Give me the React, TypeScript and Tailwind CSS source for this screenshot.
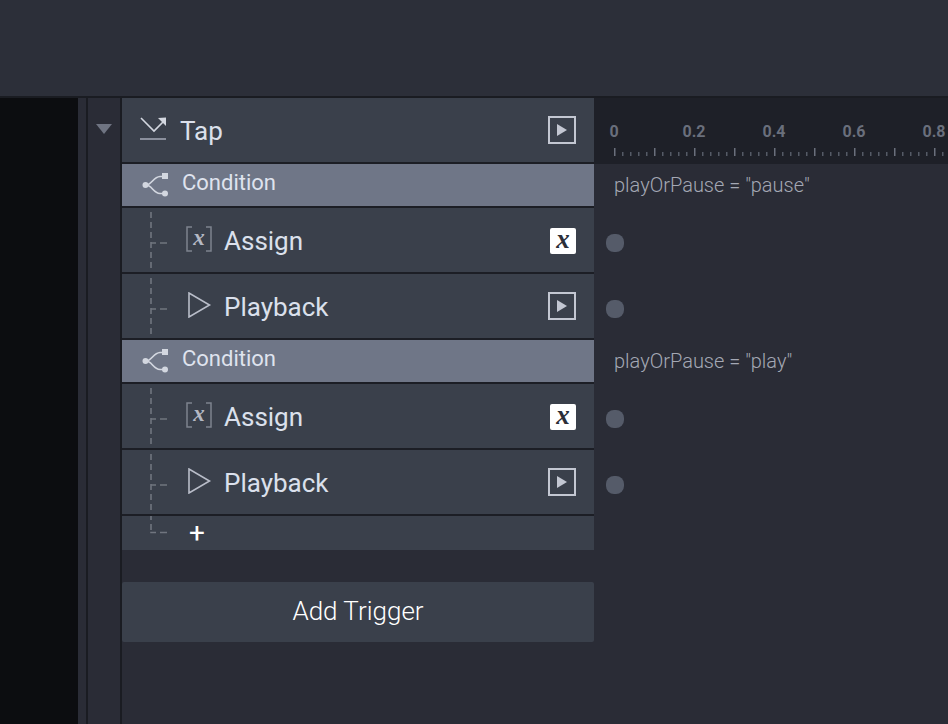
const ticks = Array.from({ length: 42 }, (_, i) => i);

function TapIcon() {
  return (
    <svg width="28" height="26" viewBox="0 0 28 26" fill="none" className="shrink-0">
      <path d="M1 1 L14 14 L23 5" stroke="#d3d7e0" strokeWidth="1.6" />
      <path d="M26 0.5 V9 L18 1 Z" fill="#d3d7e0" />
      <path d="M0 22 H26" stroke="#8a8f9c" strokeWidth="2" />
    </svg>
  );
}

function ConditionIcon() {
  return (
    <svg width="28" height="24" viewBox="0 0 28 24" fill="none" className="shrink-0">
      <path d="M4 12 C10 12 11 4 18 3.5 H21" stroke="#d3d7e0" strokeWidth="1.6" />
      <path d="M4 12 C10 12 11 20 18 20.5 H22" stroke="#d3d7e0" strokeWidth="1.6" />
      <circle cx="3.5" cy="12" r="3" fill="#d3d7e0" />
      <rect x="20" y="0" width="6" height="6" fill="#d3d7e0" />
      <circle cx="23" cy="20.5" r="3" fill="#d3d7e0" />
    </svg>
  );
}

function VarIcon() {
  return (
    <div className="relative flex h-[26px] w-[26px] shrink-0 items-center justify-center">
      <svg width="26" height="26" viewBox="0 0 26 26" fill="none" className="absolute inset-0">
        <path d="M6 1 H1 V25 H6" stroke="#7d828f" strokeWidth="1.5" />
        <path d="M20 1 H25 V25 H20" stroke="#7d828f" strokeWidth="1.5" />
      </svg>
      <span className="mb-1 font-['Liberation_Serif',serif] text-[23px] leading-none font-bold text-[#b4b8c3] italic">x</span>
    </div>
  );
}

function PlayOutline() {
  return (
    <svg width="26" height="26" viewBox="0 0 26 26" fill="none" className="shrink-0">
      <path d="M3 1 V25 L23.5 13 Z" stroke="#b9bdc9" strokeWidth="1.6" />
    </svg>
  );
}

function PlayBox() {
  return (
    <div className="flex h-7 w-7 items-center justify-center border-2 border-[#c3c7d2]">
      <svg width="12" height="14" viewBox="0 0 12 14">
        <path d="M1 1 V13 L11 7 Z" fill="#c3c7d2" />
      </svg>
    </div>
  );
}

function VarBox() {
  return (
    <div className="mt-0.5 flex h-[26px] w-[26px] items-center justify-center rounded-[2px] bg-white">
      <span className="mb-1 font-['Liberation_Serif',serif] text-[27px] leading-none font-bold text-[#2b2e38] italic">x</span>
    </div>
  );
}

function Connector({ last }: { last?: boolean }) {
  if (last) {
    return (
      <svg width="18" height="34" viewBox="0 0 18 34" fill="none" className="absolute top-0 left-[28px]">
        <path d="M1 0 V4 M1 8 V14" stroke="#70757f" strokeWidth="1.6" />
        <path d="M0.2 16.5 H6 M10 16.5 H17" stroke="#70757f" strokeWidth="1.6" />
      </svg>
    );
  }
  return (
    <svg width="18" height="64" viewBox="0 0 18 64" fill="none" className="absolute top-0 left-[28px]">
      <path d="M1 4 V62" stroke="#70757f" strokeWidth="1.6" strokeDasharray="6 4" />
      <path d="M1 35 H6 M10 35 H17" stroke="#70757f" strokeWidth="1.6" />
    </svg>
  );
}

function Divider() {
  return <div className="h-0.5 w-[472px] bg-[#1c1e25]" />;
}

function ConditionRow({ expr }: { expr: string }) {
  return (
    <div className="flex h-[42px] items-stretch">
      <div className="flex w-[472px] items-center bg-[#6f7687] pl-5">
        <ConditionIcon />
        <span className="mb-1 ml-3 text-[22px] leading-none text-[#dfe3ee]">Condition</span>
      </div>
      <div className="flex items-center pl-5 text-[20px] font-light text-[#a4a8b4]">playOrPause = "{expr}"</div>
    </div>
  );
}

function ActionRow({ label, icon, action }: { label: string; icon: React.ReactNode; action: React.ReactNode }) {
  return (
    <div className="flex h-16 items-stretch">
      <div className="relative flex w-[472px] items-center bg-[#3a404b] pr-[18px] pl-16">
        <Connector />
        <div className="mb-0.5">{icon}</div>
        <span className="mt-0.5 ml-3 flex-1 text-[26px] leading-none text-[#dbe0ec]">{label}</span>
        {action}
      </div>
      <div className="flex items-center pt-1.5 pl-3">
        <div className="h-[18px] w-[18px] rounded-[8px] bg-[#555b69]" />
      </div>
    </div>
  );
}

export default function App() {
  return (
    <div className="flex h-[724px] w-[948px] flex-col overflow-hidden bg-[#2a2c36] font-['Roboto',sans-serif]">
      <div className="h-24 shrink-0 bg-[#2c2f39]" />
      <div className="h-0.5 shrink-0 bg-[#1a1c22]" />
      <div className="flex min-h-0 flex-1">
        <div className="w-[78px] shrink-0 bg-[#0c0d10]" />
        <div className="w-2 shrink-0 bg-[#2a2c36]" />
        <div className="w-0.5 shrink-0 bg-[#1a1c22]" />
        <div className="flex w-8 shrink-0 justify-center bg-[#2a2c36] pt-[26px]">
          <div className="h-0 w-0 border-x-8 border-t-10 border-x-transparent border-t-[#6f7482]" />
        </div>
        <div className="w-0.5 shrink-0 bg-[#1a1c22]" />

        <div className="flex min-w-0 flex-1 flex-col">
          <div className="flex h-[66px] shrink-0 items-stretch">
            <div className="flex w-[472px] flex-col">
              <div className="flex h-16 items-center bg-[#3a404b] pr-[18px] pl-[18px]">
                <TapIcon />
                <span className="mt-0.5 ml-3 flex-1 text-[26px] leading-none text-[#dbe0ec]">Tap</span>
                <PlayBox />
              </div>
              <Divider />
            </div>
            <div className="relative flex-1 overflow-hidden bg-[#1e2028]">
              <div className="mt-6 -ml-5 flex text-[16px] leading-5 font-bold text-[#6a6f7c]">
                {['0', '0.2', '0.4', '0.6', '0.8'].map((n) => (
                  <span key={n} className="w-20 shrink-0 text-center">
                    {n}
                  </span>
                ))}
              </div>
              <svg width="354" height="10" viewBox="0 0 354 10" className="absolute top-[50px] left-0">
                {ticks.map((i) => (
                  <rect
                    key={i}
                    x={20 + i * 8}
                    y={i % 5 === 0 ? 0 : 4}
                    width="1.5"
                    height={i % 5 === 0 ? 8 : 4}
                    fill={i % 5 === 0 ? '#6a6f7c' : '#555a66'}
                  />
                ))}
              </svg>
            </div>
          </div>

          <ConditionRow expr="pause" />
          <Divider />
          <ActionRow label="Assign" icon={<VarIcon />} action={<VarBox />} />
          <Divider />
          <ActionRow label="Playback" icon={<PlayOutline />} action={<PlayBox />} />
          <Divider />
          <ConditionRow expr="play" />
          <Divider />
          <ActionRow label="Assign" icon={<VarIcon />} action={<VarBox />} />
          <Divider />
          <ActionRow label="Playback" icon={<PlayOutline />} action={<PlayBox />} />
          <Divider />
          <div className="relative flex h-[34px] w-[472px] items-center bg-[#3a404b] pl-[67px]">
            <Connector last />
            <span className="text-[28px] leading-none font-normal text-white">+</span>
          </div>

          <button className="mt-8 h-[60px] w-[472px] rounded-[2px] bg-[#3a404b] pb-0.5 text-[26px] font-light text-white">
            Add Trigger
          </button>
        </div>
      </div>
    </div>
  );
}
